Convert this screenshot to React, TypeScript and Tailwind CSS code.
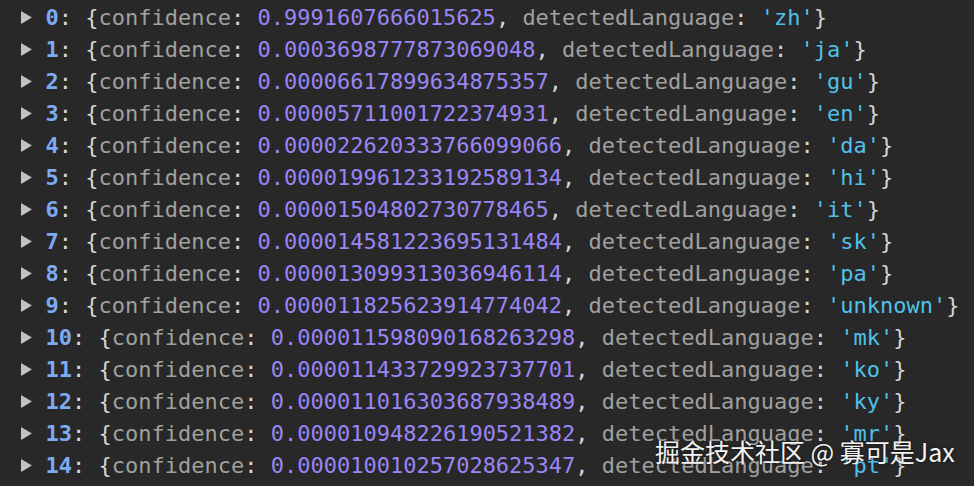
const ROWS: [string, string][] = [
  ["0.9991607666015625", "zh"],
  ["0.0003698777873069048", "ja"],
  ["0.00006617899634875357", "gu"],
  ["0.00005711001722374931", "en"],
  ["0.000022620333766099066", "da"],
  ["0.000019961233192589134", "hi"],
  ["0.00001504802730778465", "it"],
  ["0.000014581223695131484", "sk"],
  ["0.000013099313036946114", "pa"],
  ["0.000011825623914774042", "unknown"],
  ["0.000011598090168263298", "mk"],
  ["0.000011433729923737701", "ko"],
  ["0.000011016303687938489", "ky"],
  ["0.000010948226190521382", "mr"],
  ["0.000010010257028625347", "pt"],
];

function Row({ index, confidence, lang }: { index: number; confidence: string; lang: string }) {
  return (
    <div className="flex items-center h-8 whitespace-pre">
      <span className="inline-flex w-[26.5px] items-center">
        <svg width="11" height="13" viewBox="0 0 11 13" className="ml-[2px]">
          <path d="M0 0 L11 6.5 L0 13 Z" fill="#c2c2c2" />
        </svg>
      </span>
      <span className="font-bold text-[#7daaf0]">{index}</span>
      <span className="text-[#d6d6d6]">{": {"}</span>
      <span className="text-[#a0a0a0]">confidence</span>
      <span className="text-[#d6d6d6]">{": "}</span>
      <span className="text-[#9a85f5]">{confidence}</span>
      <span className="text-[#d6d6d6]">{", "}</span>
      <span className="text-[#a0a0a0]">detectedLanguage</span>
      <span className="text-[#d6d6d6]">{": "}</span>
      <span className="text-[#4fc1e9]">'{lang}'</span>
      <span className="text-[#d6d6d6]">{"}"}</span>
    </div>
  );
}

export default function App() {
  return (
    <div className="relative w-[974px] h-[486px] overflow-hidden bg-[#282828]">
      <div
        className="pl-[19px] pt-[1px] text-[22px]"
        style={{ fontFamily: '"DejaVu Sans Mono", monospace' }}
      >
        {ROWS.map(([c, l], i) => (
          <Row key={i} index={i} confidence={c} lang={l} />
        ))}
      </div>

      {/* watermark */}
      <div
        className="absolute left-[655px] top-[435px] text-[25px] leading-[32px] text-[#f4f4f4] whitespace-nowrap [text-shadow:0_0_3px_rgba(0,0,0,0.6)]"
        style={{ fontFamily: '"Noto Sans CJK SC", "Noto Sans", sans-serif' }}
      >
        掘金技术社区 @ 寡可是Jax
      </div>
    </div>
  );
}
